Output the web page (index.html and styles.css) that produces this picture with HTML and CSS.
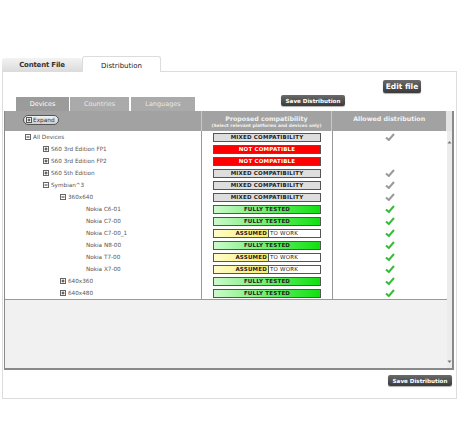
FILE: index.html
```html
<!DOCTYPE html>
<html>
<head>
<meta charset="utf-8">
<link rel="stylesheet" href="styles.css">
</head>
<body>
<div class="page">
  <div class="tabs">
    <div class="tab tab-off">Content File</div>
    <div class="tab tab-on">Distribution</div>
  </div>
  <div class="panel">
    <div class="edit-row"><span class="btn btn-edit">Edit file</span></div>
    <div class="sub-row">
      <div class="subtabs">
        <div class="subtab subtab-on">Devices</div>
        <div class="subtab st-countries">Countries</div>
        <div class="subtab st-languages">Languages</div>
      </div>
      <span class="btn btn-save top-save">Save Distribution</span>
    </div>
    <div class="grid">
      <div class="ghead">
        <div class="gh gh-tree"><span class="expand"><svg class="ico" width="6" height="6" viewBox="0 0 6 6"><rect x="0.5" y="0.5" width="5" height="5" fill="#fff" stroke="#555"/><path d="M1.5 3H4.5M3 1.5V4.5" stroke="#333"/></svg>Expand</span></div>
        <div class="gh gh-prop"><div class="h1">Proposed compatibility</div><div class="h2">(Select relevant platforms and devices only)</div></div>
        <div class="gh gh-allow"><div class="h1">Allowed distribution</div></div>
        <div class="gh gh-scroll"></div>
      </div>
      <div class="gbody">
        <div class="gmain">
          <div class="rows">
            <div class="row"><div class="c-tree l1"><svg class="ico" width="6" height="6" viewBox="0 0 6 6"><rect x="0.5" y="0.5" width="5" height="5" fill="#fff" stroke="#666"/><path d="M1.5 3H4.5" stroke="#333"/></svg>All Devices</div><div class="c-prop"><span class="bar mixed">MIXED COMPATIBILITY</span></div><div class="c-allow"><svg class="chk" width="10" height="8" viewBox="0 0 10 8"><path d="M1 4.5L3.8 7L9 1" fill="none" stroke="#9a9a9a" stroke-width="2"/></svg></div></div>
            <div class="row"><div class="c-tree l2"><svg class="ico" width="6" height="6" viewBox="0 0 6 6"><rect x="0.5" y="0.5" width="5" height="5" fill="#fff" stroke="#666"/><path d="M1.5 3H4.5M3 1.5V4.5" stroke="#333"/></svg>S60 3rd Edition FP1</div><div class="c-prop"><span class="bar notc">NOT COMPATIBLE</span></div><div class="c-allow"></div></div>
            <div class="row"><div class="c-tree l2"><svg class="ico" width="6" height="6" viewBox="0 0 6 6"><rect x="0.5" y="0.5" width="5" height="5" fill="#fff" stroke="#666"/><path d="M1.5 3H4.5M3 1.5V4.5" stroke="#333"/></svg>S60 3rd Edition FP2</div><div class="c-prop"><span class="bar notc">NOT COMPATIBLE</span></div><div class="c-allow"></div></div>
            <div class="row"><div class="c-tree l2"><svg class="ico" width="6" height="6" viewBox="0 0 6 6"><rect x="0.5" y="0.5" width="5" height="5" fill="#fff" stroke="#666"/><path d="M1.5 3H4.5M3 1.5V4.5" stroke="#333"/></svg>S60 5th Edition</div><div class="c-prop"><span class="bar mixed">MIXED COMPATIBILITY</span></div><div class="c-allow"><svg class="chk" width="10" height="8" viewBox="0 0 10 8"><path d="M1 4.5L3.8 7L9 1" fill="none" stroke="#9a9a9a" stroke-width="2"/></svg></div></div>
            <div class="row"><div class="c-tree l2"><svg class="ico" width="6" height="6" viewBox="0 0 6 6"><rect x="0.5" y="0.5" width="5" height="5" fill="#fff" stroke="#666"/><path d="M1.5 3H4.5" stroke="#333"/></svg>Symbian^3</div><div class="c-prop"><span class="bar mixed">MIXED COMPATIBILITY</span></div><div class="c-allow"><svg class="chk" width="10" height="8" viewBox="0 0 10 8"><path d="M1 4.5L3.8 7L9 1" fill="none" stroke="#9a9a9a" stroke-width="2"/></svg></div></div>
            <div class="row"><div class="c-tree l3"><svg class="ico" width="6" height="6" viewBox="0 0 6 6"><rect x="0.5" y="0.5" width="5" height="5" fill="#fff" stroke="#666"/><path d="M1.5 3H4.5" stroke="#333"/></svg>360x640</div><div class="c-prop"><span class="bar mixed">MIXED COMPATIBILITY</span></div><div class="c-allow"><svg class="chk" width="10" height="8" viewBox="0 0 10 8"><path d="M1 4.5L3.8 7L9 1" fill="none" stroke="#9a9a9a" stroke-width="2"/></svg></div></div>
            <div class="row"><div class="c-tree l4">Nokia C6-01</div><div class="c-prop"><span class="bar full">FULLY TESTED</span></div><div class="c-allow"><svg class="chk" width="10" height="8" viewBox="0 0 10 8"><path d="M1 4.5L3.8 7L9 1" fill="none" stroke="#3cb83c" stroke-width="2"/></svg></div></div>
            <div class="row"><div class="c-tree l4">Nokia C7-00</div><div class="c-prop"><span class="bar full">FULLY TESTED</span></div><div class="c-allow"><svg class="chk" width="10" height="8" viewBox="0 0 10 8"><path d="M1 4.5L3.8 7L9 1" fill="none" stroke="#3cb83c" stroke-width="2"/></svg></div></div>
            <div class="row"><div class="c-tree l4">Nokia C7-00_1</div><div class="c-prop"><span class="bar assumed"><span class="as-l">ASSUMED</span><span class="as-r">TO WORK</span></span></div><div class="c-allow"><svg class="chk" width="10" height="8" viewBox="0 0 10 8"><path d="M1 4.5L3.8 7L9 1" fill="none" stroke="#3cb83c" stroke-width="2"/></svg></div></div>
            <div class="row"><div class="c-tree l4">Nokia N8-00</div><div class="c-prop"><span class="bar full">FULLY TESTED</span></div><div class="c-allow"><svg class="chk" width="10" height="8" viewBox="0 0 10 8"><path d="M1 4.5L3.8 7L9 1" fill="none" stroke="#3cb83c" stroke-width="2"/></svg></div></div>
            <div class="row"><div class="c-tree l4">Nokia T7-00</div><div class="c-prop"><span class="bar assumed"><span class="as-l">ASSUMED</span><span class="as-r">TO WORK</span></span></div><div class="c-allow"><svg class="chk" width="10" height="8" viewBox="0 0 10 8"><path d="M1 4.5L3.8 7L9 1" fill="none" stroke="#3cb83c" stroke-width="2"/></svg></div></div>
            <div class="row"><div class="c-tree l4">Nokia X7-00</div><div class="c-prop"><span class="bar assumed"><span class="as-l">ASSUMED</span><span class="as-r">TO WORK</span></span></div><div class="c-allow"><svg class="chk" width="10" height="8" viewBox="0 0 10 8"><path d="M1 4.5L3.8 7L9 1" fill="none" stroke="#3cb83c" stroke-width="2"/></svg></div></div>
            <div class="row"><div class="c-tree l3"><svg class="ico" width="6" height="6" viewBox="0 0 6 6"><rect x="0.5" y="0.5" width="5" height="5" fill="#fff" stroke="#666"/><path d="M1.5 3H4.5M3 1.5V4.5" stroke="#333"/></svg>640x360</div><div class="c-prop"><span class="bar full">FULLY TESTED</span></div><div class="c-allow"><svg class="chk" width="10" height="8" viewBox="0 0 10 8"><path d="M1 4.5L3.8 7L9 1" fill="none" stroke="#3cb83c" stroke-width="2"/></svg></div></div>
            <div class="row"><div class="c-tree l3"><svg class="ico" width="6" height="6" viewBox="0 0 6 6"><rect x="0.5" y="0.5" width="5" height="5" fill="#fff" stroke="#666"/><path d="M1.5 3H4.5M3 1.5V4.5" stroke="#333"/></svg>640x480</div><div class="c-prop"><span class="bar full">FULLY TESTED</span></div><div class="c-allow"><svg class="chk" width="10" height="8" viewBox="0 0 10 8"><path d="M1 4.5L3.8 7L9 1" fill="none" stroke="#3cb83c" stroke-width="2"/></svg></div></div>
          </div>
          <div class="empty"></div>
        </div>
        <div class="scroll">
          <svg width="5" height="4" viewBox="0 0 5 4"><path d="M0.5 3.5L2.5 1L4.5 3.5Z" fill="#777"/></svg>
          <svg width="5" height="4" viewBox="0 0 5 4"><path d="M0.5 0.5L2.5 3L4.5 0.5Z" fill="#777"/></svg>
        </div>
      </div>
    </div>
    <div class="bottom-row"><span class="btn btn-save">Save Distribution</span></div>
  </div>
</div>
</body>
</html>
```

FILE: styles.css
```css
* { box-sizing: border-box; }
body {
  margin: 0;
  background: #fff;
  font-family: "DejaVu Sans", Verdana, sans-serif;
  color: #333;
}
.page {
  padding: 55px 0 0 1px;
  width: 457px;
}
.tabs {
  display: flex;
  align-items: flex-end;
  height: 16px;
  margin-left: 1px;
  position: relative;
  z-index: 1;
}
.tab {
  font-size: 7px;
  font-weight: bold;
  display: flex;
  align-items: center;
  justify-content: center;
  border-radius: 3px 3px 0 0;
}
.tab-off {
  width: 80px;
  height: 13px;
  background: linear-gradient(#f3f3f3, #dcdcdc);
  color: #333;
  letter-spacing: -0.2px;
}
.tab-on {
  width: 79px;
  height: 16px;
  background: #fff;
  border: 1px solid #dcdcdc;
  border-bottom: none;
  margin-bottom: -1px;
  font-weight: normal;
  color: #222;
  padding-top: 2px;
}
.panel {
  border: 1px solid #dcdcdc;
  margin-left: 1px;
  width: 455px;
  height: 328px;
  display: flex;
  flex-direction: column;
}
.edit-row {
  display: flex;
  justify-content: flex-end;
  padding: 8px 35px 0 0;
  height: 22px;
}
.btn {
  display: inline-flex;
  align-items: center;
  justify-content: center;
  background: linear-gradient(#6a6a6a, #3a3a3a);
  color: #fff;
  font-weight: bold;
  border-radius: 2px;
  font-family: "DejaVu Sans", Verdana, sans-serif;
  box-shadow: 0 1px 1px rgba(0,0,0,0.3);
}
.btn-edit {
  width: 38px;
  height: 13px;
  font-size: 7.5px;
}
.btn-save {
  width: 64px;
  height: 11px;
  font-size: 5.6px;
}
.sub-row {
  display: flex;
  height: 17px;
  align-items: flex-start;
}
.subtabs {
  display: flex;
  align-items: flex-end;
  height: 17px;
  margin-left: 13px;
  gap: 1px;
}
.subtab {
  height: 14px;
  display: flex;
  align-items: center;
  justify-content: center;
  font-size: 6.5px;
  color: #e8e8e8;
  background: #aaa;
}
.subtab-on {
  width: 53px;
  background: #9b9b9b;
  color: #fff;
}
.st-countries { width: 59px; }
.st-languages { width: 64px; margin-left: 1px; }
.top-save {
  margin-left: 86px;
  margin-top: 1px;
}
.grid {
  margin-left: 1px;
  width: 450px;
  height: 259px;
  border-style: solid;
  border-width: 0 2px 2px 1px;
  border-color: #8a8a8a;
  display: flex;
  flex-direction: column;
}
.ghead {
  display: flex;
  height: 20px;
  background: #a2a2a2;
  flex: none;
}
.gh {
  display: flex;
  flex-direction: column;
  align-items: center;
  padding-top: 4px;
  color: #f2f2f2;
  font-weight: bold;
}
.gh-tree {
  width: 196px;
  align-items: flex-start;
  padding: 4px 0 0 18px;
}
.gh-prop {
  width: 131px;
  border-left: 1px solid #c8c8c8;
}
.gh-allow {
  width: 115px;
  border-left: 1px solid #c8c8c8;
}
.gh-scroll {
  width: 6px;
  background: #e4e4e4;
  padding: 0;
}
.h1 { font-size: 6.3px; line-height: 8px; }
.h2 { font-size: 4.4px; line-height: 6px; white-space: nowrap; }
.expand {
  display: inline-flex;
  align-items: center;
  gap: 1px;
  height: 10px;
  padding: 0 3px 0 2px;
  border: 1px solid #555;
  border-radius: 5px;
  background: linear-gradient(#f4f4f4, #cfcfcf);
  color: #333;
  font-weight: normal;
  font-size: 5.8px;
}
.gbody {
  display: flex;
  flex: 1;
}
.gmain {
  flex: 1;
  display: flex;
  flex-direction: column;
}
.rows {
  background: #fff;
  border-bottom: 1px solid #999;
}
.row {
  display: flex;
  height: 12px;
}
.c-tree {
  width: 196px;
  display: flex;
  align-items: center;
  gap: 2px;
  font-size: 5.7px;
  color: #555;
}
.l1 { padding-left: 20px; }
.l2 { padding-left: 38px; }
.l3 { padding-left: 55px; }
.l4 { padding-left: 81px; }
.c-prop {
  width: 131px;
  border-left: 1px solid #999;
  display: flex;
  align-items: center;
  justify-content: center;
}
.c-allow {
  width: 115px;
  border-left: 1px solid #999;
  display: flex;
  align-items: center;
  justify-content: center;
}
.bar {
  width: 108px;
  height: 9px;
  border: 1px solid #555;
  display: flex;
  align-items: center;
  justify-content: center;
  font-size: 5.5px;
  font-weight: bold;
  letter-spacing: 0.2px;
  color: #222;
  white-space: nowrap;
}
.mixed { background: #dedede; }
.notc { background: #ff0000; color: #fff; }
.full { background: linear-gradient(to right, #ccfacc, #10e010); }
.assumed {
  background: #fff;
  justify-content: flex-start;
}
.as-l {
  width: 55px;
  height: 100%;
  background: linear-gradient(to right, #fffcc8, #f6ef70);
  border-right: 1px solid #555;
  display: flex;
  align-items: center;
  justify-content: flex-end;
  padding-right: 1px;
}
.as-r {
  font-weight: normal;
  padding-left: 1px;
}
.empty {
  flex: 1;
  background: #f1f1f1;
}
.scroll {
  width: 6px;
  background: #ececec;
  display: flex;
  flex-direction: column;
  justify-content: space-between;
  align-items: center;
  padding: 9px 0 4px;
}
.bottom-row {
  display: flex;
  justify-content: flex-end;
  padding: 5px 4px 0 0;
}
```
